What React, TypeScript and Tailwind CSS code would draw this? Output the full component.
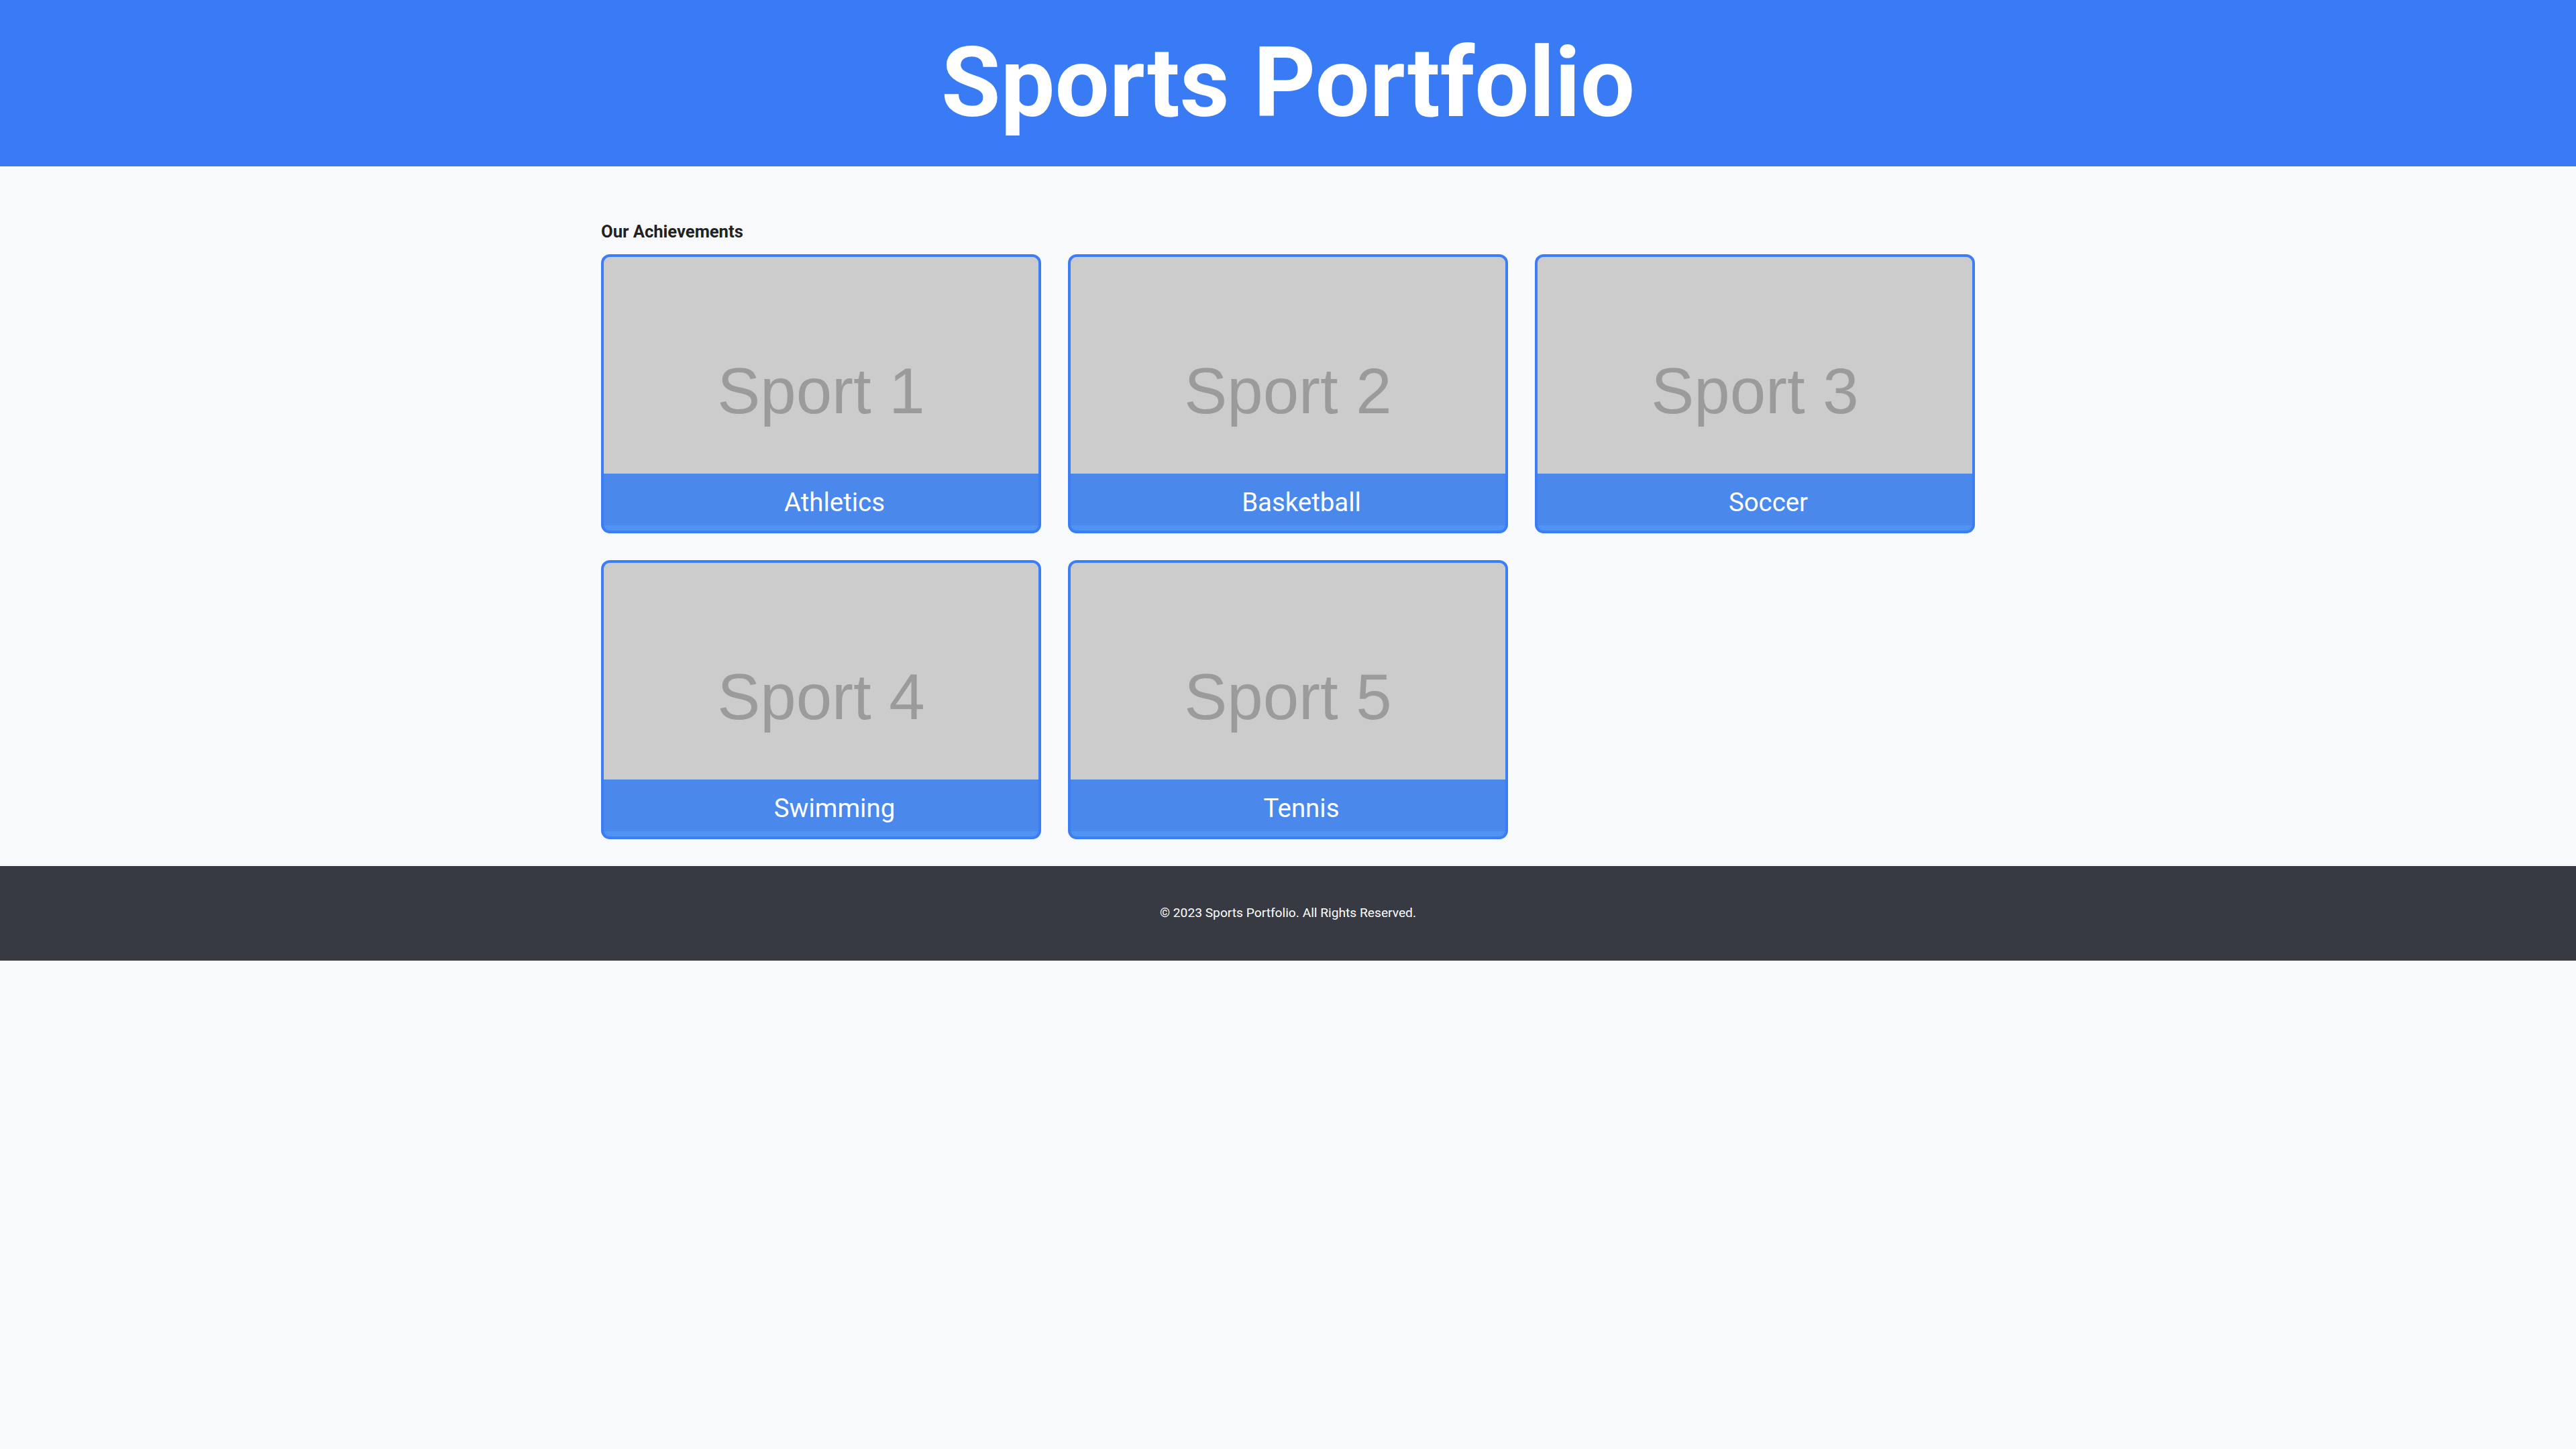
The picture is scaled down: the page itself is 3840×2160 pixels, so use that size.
import React from 'react';

// Sports shown on the achievements grid
const sports = [
  { id: 1, name: 'Athletics' },
  { id: 2, name: 'Basketball' },
  { id: 3, name: 'Soccer' },
  { id: 4, name: 'Swimming' },
  { id: 5, name: 'Tennis' },
];

const SportCard = ({ id, name }: { id: number; name: string }) => {
  return (
    <div className="flex flex-col overflow-hidden rounded-[13px] border-4 border-[#3b7df5] bg-[#4f93f5]">
      {/* placeholder image */}
      <div className="flex h-[323px] items-center justify-center bg-[#cccccc] pt-[77px]">
        <span className="font-['Liberation_Sans',Arial,sans-serif] text-[96px] leading-none text-[#9b9b9b]">
          Sport {id}
        </span>
      </div>
      <div className="flex h-[77px] items-center justify-center bg-[#4a89eb] pl-10 pt-2 text-[38.4px] text-white">
        {name}
      </div>
      <div className="h-[8px]" />
    </div>
  );
};

const App = () => {
  return (
    <div className="flex min-h-screen flex-col bg-[#f8f9fb] font-['Roboto',sans-serif]">
      <header className="flex h-[248px] items-center justify-center bg-[#387bf5]">
        <h1 className="text-[144px] font-bold leading-none text-white">Sports Portfolio</h1>
      </header>

      <main className="mx-auto w-[2048px] pt-[82px] pb-10">
        <h2 className="text-[25.6px] font-bold leading-[30px] text-[#222222]">Our Achievements</h2>
        <div className="mt-[19px] grid grid-cols-3 gap-10">
          {sports.map((s) => (
            <SportCard key={s.id} id={s.id} name={s.name} />
          ))}
        </div>
      </main>

      <footer className="flex h-[141px] items-center justify-center bg-[#373a42]">
        <p className="text-[19.2px] text-white">© 2023 Sports Portfolio. All Rights Reserved.</p>
      </footer>
    </div>
  );
};

export default App;
